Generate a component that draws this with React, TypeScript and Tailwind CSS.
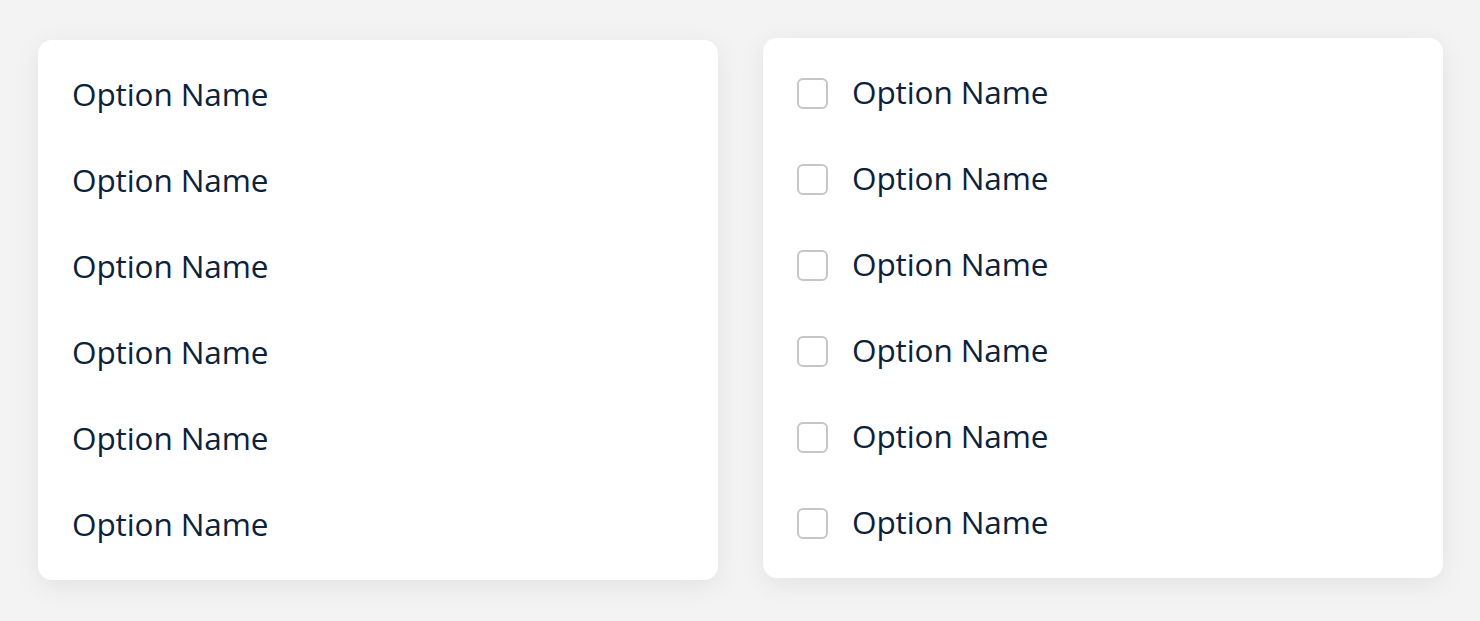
import React from 'react';

const options = ['Option Name', 'Option Name', 'Option Name', 'Option Name', 'Option Name', 'Option Name'];

const font = { fontFamily: '"Open Sans", "Noto Sans", Arial, sans-serif' };

export default function App() {
    return (
        <div className="min-h-[621px] w-[1480px] bg-[#f3f3f3] pt-[38px] pl-[38px]" style={font}>
            <div className="flex items-start gap-[45px]">
                {/* plain list */}
                <div className="mt-[2px] w-[680px] rounded-[14px] bg-white py-[12px] shadow-[0_6px_26px_rgba(0,0,0,0.07)]">
                    {options.map((label, i) => (
                        <div key={i} className="flex h-[86px] items-center px-[34px] pb-[2px] text-[31.5px] tracking-[-0.1px] text-[#0c2239]">
                            {label}
                        </div>
                    ))}
                </div>

                {/* checkbox list */}
                <div className="w-[680px] rounded-[14px] bg-white py-[12px] shadow-[0_6px_26px_rgba(0,0,0,0.07)]">
                    {options.map((label, i) => (
                        <label key={i} className="flex h-[86px] items-center gap-[24px] px-[34px] text-[31.5px] tracking-[-0.1px] text-[#0c2239]">
                            <span className="h-[31px] w-[31px] shrink-0 rounded-[6px] border-2 border-[#c6c6c6] bg-white" />
                            <span className="pb-[2px]">{label}</span>
                        </label>
                    ))}
                </div>
            </div>
        </div>
    );
}
